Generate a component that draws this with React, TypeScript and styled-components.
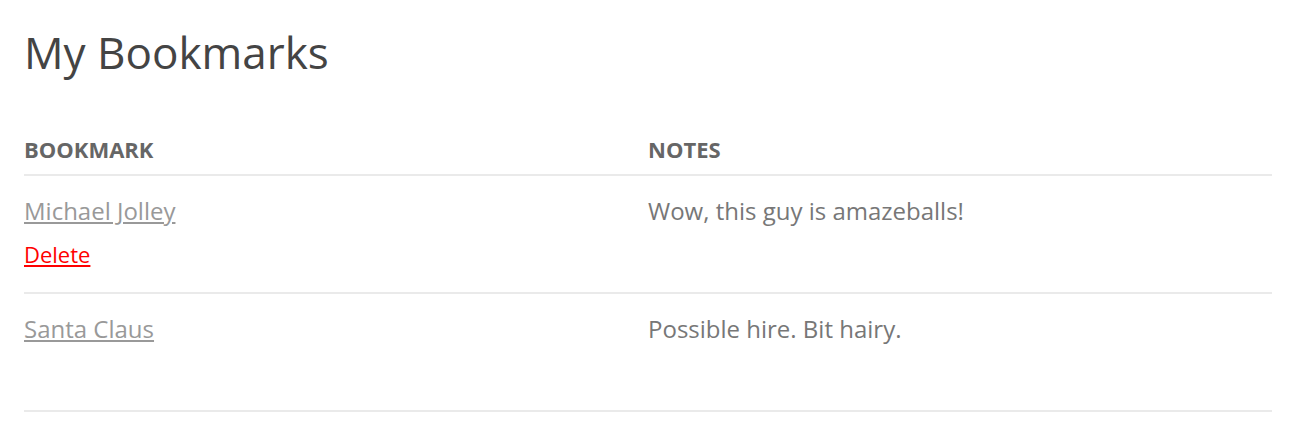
import React from 'react'
import styled, { createGlobalStyle } from 'styled-components'

const GlobalStyle = createGlobalStyle`
  body {
    margin: 0;
    background: #fff;
    font-family: 'Open Sans', 'Liberation Sans', sans-serif;
  }
`

const Page = styled.div`
  padding: 22px 22px 0 24px;
`

const Title = styled.h1`
  margin: 0 0 52px;
  font-size: 44px;
  line-height: 60px;
  font-weight: 400;
  color: #444;
`

const Table = styled.table`
  width: 100%;
  border-collapse: collapse;
`

const HeadCell = styled.th`
  text-align: left;
  width: 50%;
  padding: 0 0 10px;
  font-size: 22px;
  line-height: 30px;
  font-weight: 700;
  text-transform: uppercase;
  color: #666;
  border-bottom: 2px solid #eaeaea;
`

const Row = styled.tr`
  border-bottom: 2px solid #eaeaea;
`

const Cell = styled.td`
  vertical-align: top;
  padding: 19px 0 23px;
`

const NameLink = styled.a`
  display: block;
  font-size: 24px;
  line-height: 32px;
  color: #999;
  text-decoration: underline;
`

const DeleteLink = styled.a<{ $shown: boolean }>`
  display: block;
  margin-top: 12px;
  font-size: 22px;
  line-height: 30px;
  color: #f00;
  text-decoration: underline;
  visibility: ${({ $shown }) => ($shown ? 'visible' : 'hidden')};
`

const Note = styled.div`
  font-size: 24px;
  line-height: 32px;
  color: #777;
`

const bookmarks = [
  { name: 'Michael Jolley', notes: 'Wow, this guy is amazeballs!', canDelete: true },
  { name: 'Santa Claus', notes: 'Possible hire. Bit hairy.', canDelete: false },
]

const App = () => (
  <Page>
    <GlobalStyle />
    <Title>My Bookmarks</Title>
    <Table>
      <thead>
        <tr>
          <HeadCell>Bookmark</HeadCell>
          <HeadCell>Notes</HeadCell>
        </tr>
      </thead>
      <tbody>
        {bookmarks.map((b) => (
          <Row key={b.name}>
            <Cell>
              <NameLink href="#">{b.name}</NameLink>
              <DeleteLink href="#" $shown={b.canDelete}>
                Delete
              </DeleteLink>
            </Cell>
            <Cell>
              <Note>{b.notes}</Note>
            </Cell>
          </Row>
        ))}
      </tbody>
    </Table>
  </Page>
)

export default App
